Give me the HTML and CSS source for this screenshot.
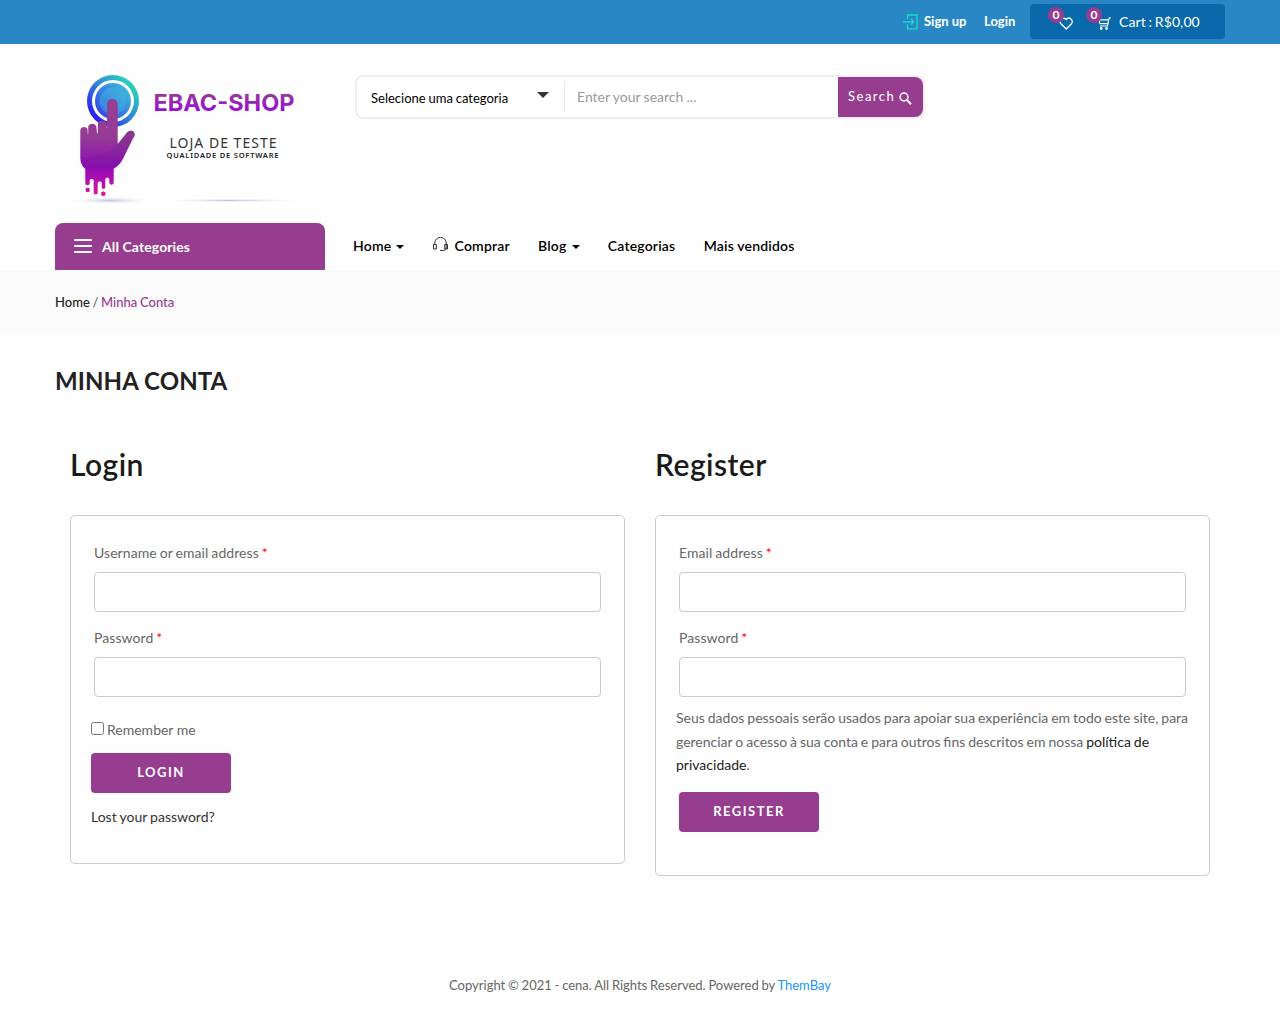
FILE: index.html
```html
<!DOCTYPE html>
<html lang="pt-BR">
<head>
<meta charset="utf-8">
<title>Minha Conta – EBAC-SHOP</title>
<link rel="stylesheet" href="styles.css">
</head>
<body>
<div class="topbar">
  <div class="container topbar-inner">
    <a class="signup" href="#">
      <svg class="signup-icon" width="15" height="16" viewBox="0 0 15 16" fill="none" stroke="#14e4c0" stroke-width="1.3"><path d="M4.600 5V1h9.400v13.800H4.600v-4M0 7.800h10.500M8 5l2.700 2.800L8 10.600"/></svg>
      <span>Sign up</span>
    </a>
    <a class="login-link" href="#">Login</a>
    <div class="cart-box">
      <a class="cart-icon wish" href="#">
        <svg width="14" height="13" viewBox="0 0 14 13" fill="none" stroke="#fff" stroke-width="1.300"><path d="M7.200 12 1.900 6.700A3.100 3.100 0 0 1 7.200 2.500a3.100 3.100 0 0 1 5.300 4.200z"/></svg>
        <span class="count">0</span>
      </a>
      <a class="cart-icon basket" href="#">
        <svg width="14" height="13" viewBox="0 0 14 13" fill="none" stroke="#fff" stroke-width="1.200"><path d="M14 1h-2L10.500 9H3M1.500 2.800h10M1.800 2.800 3 6.600h8"/><circle cx="4.200" cy="11.500" r=".8"/><circle cx="9.500" cy="11.500" r=".8"/></svg>
        <span class="count">0</span>
      </a>
      <span class="cart-text">Cart : R$0,00</span>
    </div>
  </div>
</div>

<header class="container header">
  <div class="header-row">
    <a class="logo" href="#">
      <svg width="270" height="155" viewBox="0 0 270 155">
        <defs>
          <linearGradient id="ring" x1="0" y1="1" x2="1" y2="0"><stop offset=".1" stop-color="#2a0cf5"/><stop offset=".5" stop-color="#3282d8"/><stop offset=".9" stop-color="#28dcb8"/></linearGradient>
          <linearGradient id="disc" x1="0" y1="1" x2="1" y2="0"><stop offset=".1" stop-color="#3544e8"/><stop offset=".9" stop-color="#3bbfd8"/></linearGradient>
          <linearGradient id="hand" x1="0" y1="39" x2="0" y2="136" gradientUnits="userSpaceOnUse"><stop offset="0" stop-color="#953f92"/><stop offset=".4" stop-color="#953b94"/><stop offset=".7" stop-color="#8d0bb8"/><stop offset="1" stop-color="#e012a8"/></linearGradient>
          <linearGradient id="title" x1="0" y1="33" x2="0" y2="51" gradientUnits="userSpaceOnUse"><stop offset="0" stop-color="#963d94"/><stop offset="1" stop-color="#9b0dd8"/></linearGradient>
          <radialGradient id="shade"><stop offset="0" stop-color="#c4c0e0"/><stop offset="1" stop-color="#fff" stop-opacity="0"/></radialGradient>
          <clipPath id="palm"><path d="M25 60h60v48.500H25z"/></clipPath>
        </defs>
        <ellipse cx="55" cy="140.500" rx="44" ry="4" fill="url(#shade)"/>
        <ellipse cx="176" cy="140.500" rx="78" ry="2" fill="url(#shade)"/>
        <circle cx="58" cy="41" r="26" fill="url(#ring)"/>
        <circle cx="58" cy="41" r="21" fill="#fff"/>
        <circle cx="58" cy="41" r="18" fill="url(#disc)"/>
        <circle cx="58" cy="41" r="13.500" fill="#42b8e0" opacity=".45"/>
        <path fill="url(#hand)" d="M25.300 70.500c0-4.700 7.400-4.700 7.400 0V74h.5v-6.500c0-5 8-5 8.300 0l.5 6 .8-.5v-8.500c0-5 8.900-5 8.900 0V68h.3V44.300c0-7 10.700-7 10.700 0V84L72 72.500c2.500-3 8.500-2 7.700 2.500-.2 1.500-1 2.500-2 4L68 98.700c-2.200 4.500-5 7.300-9.300 10v14.100c0 2.500-4.400 2.500-4.400 0V119.500c0-2.300-4-2.300-4 0v7.800c0 2.300-3.600 2.300-3.600 0v-4.200c0-2.300-4-2.300-4 0v9.600c0 2.300-4 2.300-4 0v-12c0-2.300-4-2.300-4 0v2.800c0 2.300-4.400 2.300-4.400 0V109c-3.500-3-5-6.500-5-11z"/>
        <path fill="#5c2078" opacity=".18" d="M25.300 97.500C42 98 58 92 62.700 84L72 72.500c2.500-3 8.500-2 7.700 2.500-.2 1.500-1 2.500-2 4L68 98.700c-2.200 4.500-5 7.300-9.300 8.300-9 2-20 2-28.400-1-3-2-4.600-5-5-8.500z"/>
        <circle cx="32.700" cy="130" r="2.200" fill="#c812a8"/><circle cx="48.300" cy="133.700" r="2.300" fill="#dc12aa"/>
        <text x="98.500" y="50.500" class="logo-name" textLength="141" lengthAdjust="spacingAndGlyphs" fill="url(#title)">EBAC-SHOP</text>
        <text x="114.500" y="88" class="logo-sub" textLength="107" lengthAdjust="spacing">LOJA DE TESTE</text>
        <text x="111.500" y="98" class="logo-tiny" textLength="112" lengthAdjust="spacing">QUALIDADE DE SOFTWARE</text>
      </svg>
    </a>
    <form class="search">
      <div class="search-select"><span>Selecione uma categoria</span><i class="select-arrow"></i></div>
      <input class="search-input" type="text" placeholder="Enter your search ...">
      <button class="search-button" type="button">Search <svg width="13" height="13" viewBox="0 0 13 13" fill="none" stroke="#fff"><circle cx="5" cy="5" r="3.900" stroke-width="1.500"/><path d="m7.800 7.800 4.200 4.400" stroke-width="2"/></svg></button>
    </form>
  </div>
  <div class="nav-row">
    <a class="all-categories" href="#">
      <svg width="18" height="16" viewBox="0 0 18 16" stroke="#fff" stroke-width="2" stroke-linecap="round"><path d="M1 3h16M1 9h16M1 15h16"/></svg>
      <span>All Categories</span>
    </a>
    <nav class="nav">
      <a class="has-menu" href="#">Home</a>
      <a class="with-icon" href="#"><svg width="15" height="15" viewBox="0 0 15 15" fill="none" stroke="#333" stroke-width="1"><path d="M1.800 7.500V6a5.700 5.700 0 0 1 11.400 0v5c0 1.500-1 2.500-3 2.500H7M.5 7.500h2.800v4.500H.5zM11.700 7.500h2.800v4.500h-2.800z"/></svg>Comprar</a>
      <a class="has-menu" href="#">Blog</a>
      <a href="#">Categorias</a>
      <a href="#">Mais vendidos</a>
    </nav>
  </div>
</header>

<div class="breadcrumb"><div class="container"><a href="#">Home</a> / <span class="current">Minha Conta</span></div></div>

<main class="container main">
  <h1 class="page-title">MINHA CONTA</h1>
  <div class="columns">
    <section class="column">
      <h2 class="form-title">Login</h2>
      <form class="card login-card">
        <label class="field"><span>Username or email address <b class="required">*</b></span><input type="text"></label>
        <label class="field"><span>Password <b class="required">*</b></span><input type="password"></label>
        <label class="remember"><input type="checkbox"><span>Remember me</span></label>
        <button class="submit" type="button">LOGIN</button>
        <a class="lost" href="#">Lost your password?</a>
      </form>
    </section>
    <section class="column">
      <h2 class="form-title">Register</h2>
      <form class="card register-card">
        <label class="field"><span>Email address <b class="required">*</b></span><input type="email"></label>
        <label class="field"><span>Password <b class="required">*</b></span><input type="password"></label>
        <p class="privacy">Seus dados pessoais serão usados para apoiar sua experiência em todo este site, para gerenciar o acesso à sua conta e para outros fins descritos em nossa <a href="#">política de privacidade</a>.</p>
        <button class="submit" type="button">REGISTER</button>
      </form>
    </section>
  </div>
</main>

<footer class="footer">Copyright © 2021 - cena. All Rights Reserved. Powered by <a href="#">ThemBay</a></footer>
</body>
</html>
```
FILE: styles.css
```css
* { box-sizing: border-box; }
body {
  margin: 0;
  font: 14px/24px Lato, "Liberation Sans", sans-serif;
  color: #666;
  background: #fefefe;
}
a { color: inherit; text-decoration: none; }
svg { display: block; flex: none; }
input, button { font: inherit; }
.container { width: 1170px; margin: 0 auto; }

.topbar { height: 44px; background: #2a87c5; color: #fff; }
.topbar-inner { display: flex; justify-content: flex-end; padding-top: 4px; }
.signup, .login-link { display: flex; height: 34px; align-items: center; font-size: 13px; font-weight: 700; white-space: nowrap; }
.signup { gap: 6px; width: 81px; }
.signup-icon { margin-top: 1px; }
.login-link { width: 46px; }
.cart-box { display: flex; align-items: center; width: 195px; height: 35px; padding-left: 18px; border-radius: 4px; background: #0a69aa; }
.cart-icon { position: relative; display: flex; align-items: flex-end; justify-content: flex-end; height: 21px; margin-top: -5px; }
.wish { width: 25px; }
.basket { width: 25px; margin-left: 13px; }
.count {
  position: absolute; left: 0; top: -2px; width: 16px; height: 16px;
  border-radius: 50%; background: #963d8f;
  font-size: 12px; line-height: 16px; font-weight: 700; text-align: center;
}
.cart-text { margin-left: 8px; white-space: nowrap; word-spacing: -1px; letter-spacing: .1px; }

.header { height: 227px; display: flex; flex-direction: column; justify-content: space-between; padding: 16px 0 1px; }
.header-row { display: flex; height: 155px; }
.logo { width: 300px; }
.logo-name { font: 700 23px Inter, sans-serif; }
.logo-sub { font: 14px "Noto Sans", sans-serif; fill: #333; }
.logo-tiny { font: 600 7.5px "Noto Sans", sans-serif; fill: #222; }

.search { display: flex; width: 570px; height: 44px; margin-top: 15px; border: 2px solid #efefef; border-radius: 8px; background: #fff; }
.search-select {
  display: flex; justify-content: space-between; width: 208px; height: 30px; margin-top: 5px; padding: 0 15px 0 14px;
  border-right: 1px solid #e8e8e8; color: #000; font-size: 13px; line-height: 33px; word-spacing: -.5px;
}
.select-arrow { margin-top: 10px; height: 0; border: 6px solid transparent; border-top-color: #333; border-bottom: 0; }
.search-input { flex: 1; min-width: 0; padding: 0 12px; border: 0; outline: 0; background: none; word-spacing: -.3px; }
.search-input::placeholder { color: #999; opacity: 1; }
.search-button {
  display: flex; align-items: center; gap: 4px; width: 85px; padding: 0 0 2px 10px;
  border: 0; border-radius: 0 8px 8px 0; background: #963d8f; color: #fff; font-size: 13px; letter-spacing: 1.5px;
}
.search-button svg { margin-top: 4px; }

.nav-row { display: flex; height: 47px; }
.all-categories { display: flex; align-items: center; gap: 10px; width: 270px; padding-left: 19px; border-radius: 8px 8px 0 0; background: #963d8f; color: #fff; font-weight: 700; }
.all-categories svg { margin-top: -3px; }
.all-categories span { padding-top: 1px; letter-spacing: .1px; }
.nav { display: flex; align-items: center; gap: 28.300px; height: 45px; margin-left: 28px; color: #000; font-weight: 600; letter-spacing: .18px; }
.nav a { display: flex; align-items: center; }
.nav svg { margin: -2px 7px 0 0; }
.has-menu::after { content: ""; margin: 3px 0 0 5px; border: 4px solid transparent; border-top-color: #000; border-bottom: 0; }

.breadcrumb { height: 62px; padding-top: 19px; background: #fafafa; font-size: 13px; font-weight: 500; word-spacing: -.6px; }
.breadcrumb a { color: #222; }
.current { color: #963d8f; }

.main { height: 601px; }
.page-title { margin: 0; padding-top: 33px; color: #222; font-size: 24px; line-height: 30px; font-weight: 700; letter-spacing: .1px; }
.columns { display: flex; gap: 30px; align-items: flex-start; padding: 48px 15px 0; }
.column { width: 555px; }
.form-title { margin: 0 0 31px; color: #1a1a1a; font-size: 30px; line-height: 40px; font-weight: 600; letter-spacing: .45px; }
.card { display: flex; flex-direction: column; align-items: flex-start; padding: 25px 20px 0; border: 1px solid #ccc; border-radius: 5px; }
.login-card { height: 349px; }
.register-card { height: 361px; }
.field { display: flex; flex-direction: column; gap: 7px; width: 513px; margin-bottom: 14px; padding: 0 3px; word-spacing: -.7px; letter-spacing: .07px; }
.field input { width: 100%; height: 40px; border: 1px solid #ccc; border-radius: 4px; outline: 0; background: #fefefe; }
.required { color: #f00; font-weight: 400; }
.remember { display: flex; align-items: center; gap: 3px; margin-top: 7px; }
.remember input { width: 13px; height: 13px; margin: -3px 0 0; }
.submit { width: 140px; height: 40px; padding: 0 0 2px; border: 0; border-radius: 4px; background: #963d8f; color: #fff; font-size: 13px; font-weight: 700; letter-spacing: 1.5px; }
.login-card .submit { margin-top: 11px; }
.lost { margin-top: 12px; color: #333; word-spacing: -.5px; }
.privacy { width: 520px; margin: -5px 0 15px; line-height: 23.600px; word-spacing: -.65px; }
.privacy a { color: #222; }
.register-card .submit { margin-left: 3px; }

.footer { padding-top: 39px; text-align: center; font-size: 13px; word-spacing: -.55px; }
.footer a { color: #1c94f4; }
```
